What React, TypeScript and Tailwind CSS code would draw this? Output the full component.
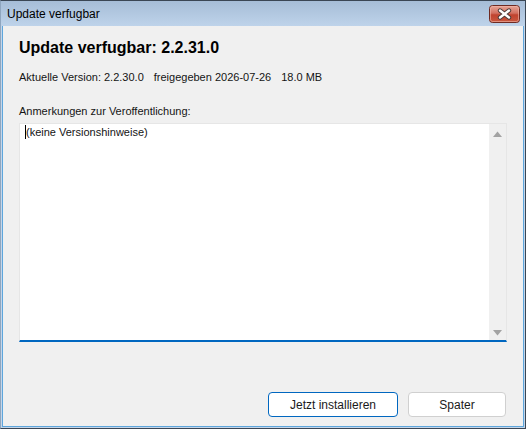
import React from 'react';

const font = { fontFamily: '"Liberation Sans", Arial, sans-serif' };

function CloseButton() {
  return (
    <svg width="31" height="18" viewBox="0 0 31 18" className="block">
      <defs>
        <linearGradient id="closeBg" x1="0" y1="0" x2="0" y2="1">
          <stop offset="0" stopColor="#e8a89a" />
          <stop offset="0.45" stopColor="#d27060" />
          <stop offset="0.55" stopColor="#c0432f" />
          <stop offset="1" stopColor="#c9583f" />
        </linearGradient>
      </defs>
      <rect x="0.5" y="0.5" width="30" height="17" rx="3" fill="url(#closeBg)" stroke="#6e2a22" />
      <rect x="1.5" y="1.5" width="28" height="15" rx="2" fill="none" stroke="#f0b8aa" strokeOpacity="0.6" />
      <path d="M11 5.5 L20 12.5 M20 5.5 L11 12.5" stroke="#4a3a38" strokeWidth="4.4" strokeLinecap="round" />
      <path d="M11 5.5 L20 12.5 M20 5.5 L11 12.5" stroke="#ffffff" strokeWidth="2.4" strokeLinecap="round" />
    </svg>
  );
}

function Arrow({ up }: { up?: boolean }) {
  return (
    <svg width="9" height="6" viewBox="0 0 9 6" className="block">
      <path d={up ? 'M0 6 L4.5 0.5 L9 6 Z' : 'M0 0 L4.5 5.5 L9 0 Z'} fill="#a3a3a3" />
    </svg>
  );
}

export default function App() {
  return (
    <div
      className="w-[526px] h-[429px] flex flex-col bg-[#c4d6ea] border border-[#3a4654] border-l-[#8fa6bf]"
      style={font}
    >
      {/* Title bar */}
      <div className="h-[25px] shrink-0 flex items-center justify-between pl-[6px] pr-[5px] bg-gradient-to-b from-[#a6bdd7] to-[#bed3ea]">
        <span className="text-[12px] leading-[14px] text-black">Update verfugbar</span>
        <CloseButton />
      </div>

      {/* Body */}
      <div className="flex-1 mx-[1px] mb-[1px] flex flex-col bg-[#f0f0f0] border border-t-0 border-[#5ea6dc] px-[16px] pt-[12px] pb-[9px]">
        <h1 className="text-[16px] leading-[20px] font-bold text-black">Update verfugbar: 2.2.31.0</h1>

        <div className="mt-[12px] flex gap-[10px] text-[11px] leading-[14px] text-[#141414]">
          <span>Aktuelle Version: 2.2.30.0</span>
          <span>freigegeben 2026-07-26</span>
          <span>18.0 MB</span>
        </div>

        <div className="mt-[20px] text-[11px] leading-[14px] text-[#141414]">Anmerkungen zur Veroffentlichung:</div>

        <div className="mt-[5px] h-[219px] flex bg-white border border-[#e6e6e6] border-b-2 border-b-[#0067c0]">
          <div className="flex-1 pl-[5px] pt-[1px] text-[11px] leading-[14px] text-[#141414] flex items-start">
            <span className="w-px h-[14px] bg-black" />
            <span>(keine Versionshinweise)</span>
          </div>
          <div className="w-[17px] bg-[#f0f0f0] flex flex-col items-center justify-between pt-[7px] pb-[4px]">
            <Arrow up />
            <Arrow />
          </div>
        </div>

        <div className="mt-auto flex justify-end gap-[10px] pr-[1px]">
          <button className="w-[130px] h-[25px] rounded-[4px] bg-white border border-[#0067c0] text-[12px] text-[#1a1a1a]">
            Jetzt installieren
          </button>
          <button className="w-[98px] h-[25px] rounded-[4px] bg-white border border-[#d0d0d0] text-[12px] text-[#1a1a1a]">
            Spater
          </button>
        </div>
      </div>
    </div>
  );
}
